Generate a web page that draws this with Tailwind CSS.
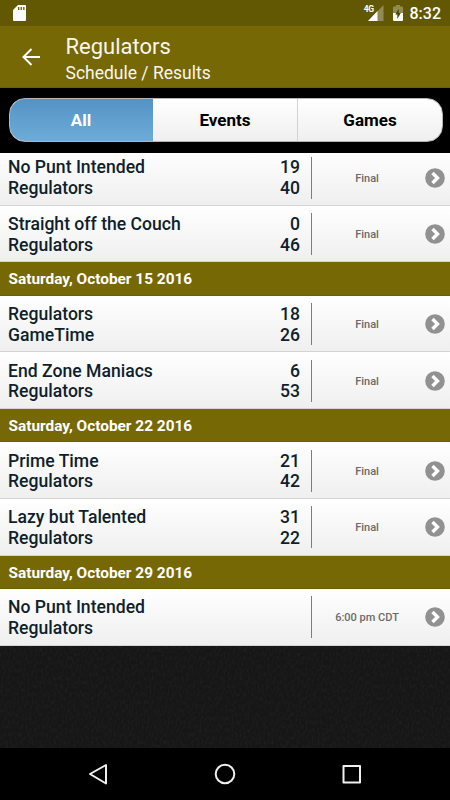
<!DOCTYPE html>
<html lang="en">

<head>
    <meta charset="UTF-8">
    <meta name="viewport" content="width=device-width, initial-scale=1.0">
    <title>Regulators - Schedule / Results</title>
    <script src="https://cdn.jsdelivr.net/npm/@tailwindcss/browser@4"></script>
</head>

<body class="bg-black font-[Roboto,sans-serif]">
    <div class="flex flex-col w-[450px] h-[800px] overflow-hidden">
        <!-- Status bar -->
        <div class="flex items-center h-[26px] shrink-0 bg-[#625804] text-white">
            <svg class="ml-[13px] w-[13px] h-4" viewBox="0 0 13 16">
                <path d="M5 0h7q1 0 1 1v14q0 1-1 1H1q-1 0-1-1V5z" fill="#fff" />
                <path d="M5 2h1.3v3H5zM7.6 2h1.3v3H7.6zM10.2 2h1.3v3h-1.3z" fill="#625804" />
            </svg>
            <div class="flex ml-auto mr-[9px] items-center">
                <span class="text-[8.5px] font-bold leading-none -mt-2 tracking-[-0.5px]">4G</span>
                <svg class="-ml-[6px] w-[16px] h-4" viewBox="0 0 16 16">
                    <path d="M15.500 0v16H0z" fill="#918b51" />
                    <path d="M9.500 6v10H0z" fill="#fff" />
                </svg>
                <svg class="ml-[9px] w-[10px] h-4" viewBox="0 0 10 16">
                    <path d="M3 0h4v1.500h2q1 0 1 1V8H0V2.500q0-1 1-1h2z" fill="#918b51" />
                    <path d="M0 8h10v7q0 1-1 1H1q-1 0-1-1z" fill="#fff" />
                    <path d="M5.700 3.800L2.300 9.500h2V14l3.500-5.900h-2.100z" fill="#4b4303" />
                </svg>
                <span class="ml-[7px] mt-[2px] text-[16px] font-medium leading-none">8:32</span>
            </div>
        </div>

        <!-- Title bar -->
        <header class="flex h-[62px] shrink-0 bg-[#766804] border-b border-[#6b5f08] text-[#f7f6ef]">
            <svg class="ml-[22px] mt-[22px] w-[18px] h-[18px]" viewBox="0 0 18 18" fill="none" stroke="#fff" stroke-width="2">
                <path d="M18 9H1.500M9.500 1L1.500 9l8 8" />
            </svg>
            <div class="ml-[25.500px] pt-[7px]">
                <h1 class="text-[22px] leading-[28px]">Regulators</h1>
                <h2 class="text-[17.500px] leading-[24px]">Schedule / Results</h2>
            </div>
        </header>

        <!-- Filter -->
        <div class="h-[65px] shrink-0 bg-black pt-[10px] pl-[9px]">
            <div class="flex w-[434px] h-[44px] rounded-[16px] overflow-hidden border border-[#b5b5b5] bg-linear-to-b from-white to-[#efefef] text-[17px] font-bold leading-[42px] text-center text-black">
                <div class="-my-px -ml-px w-[144px] border-y border-[#86b9dc] bg-linear-to-b from-[#5393c5] to-[#6eacd8] text-white">All</div>
                <div class="w-[145px] border-r border-[#d2d2d2]">Events</div>
                <div class="flex-1">Games</div>
            </div>
        </div>

        <!-- Schedule -->
        <main class="relative h-[595px] shrink-0 overflow-hidden bg-[#161617]">
            <svg class="absolute inset-0 w-full h-full" aria-hidden="true">
                <filter id="grain">
                    <feTurbulence type="fractalNoise" baseFrequency="0.5 0.25" numOctaves="2" />
                    <feColorMatrix values="0 0 0 0 1  0 0 0 0 1  0 0 0 0 1  0.08 0 0 0 -0.032" />
                </filter>
                <rect width="100%" height="100%" filter="url(#grain)" />
            </svg>
            <div id="schedule" class="relative -mt-[4px]"></div>
        </main>

        <!-- Navigation bar -->
        <nav class="h-[52px] shrink-0 bg-black">
            <svg width="450" height="52" fill="none" stroke="#f0f0f0" stroke-width="2" stroke-linejoin="round">
                <path d="M106 17v18.500L90 26z" />
                <circle cx="225" cy="26" r="9.300" />
                <rect x="343.500" y="18" width="16.500" height="16.500" />
            </svg>
        </nav>
    </div>

    <script>
        const schedule = [
            { away: 'No Punt Intended', home: 'Regulators', score: ['19', '40'], status: 'Final' },
            { away: 'Straight off the Couch', home: 'Regulators', score: ['0', '46'], status: 'Final' },
            { date: 'Saturday, October 15 2016' },
            { away: 'Regulators', home: 'GameTime', score: ['18', '26'], status: 'Final' },
            { away: 'End Zone Maniacs', home: 'Regulators', score: ['6', '53'], status: 'Final' },
            { date: 'Saturday, October 22 2016' },
            { away: 'Prime Time', home: 'Regulators', score: ['21', '42'], status: 'Final' },
            { away: 'Lazy but Talented', home: 'Regulators', score: ['31', '22'], status: 'Final' },
            { date: 'Saturday, October 29 2016' },
            { away: 'No Punt Intended', home: 'Regulators', score: ['', ''], status: '6:00 pm CDT' }
        ];

        document.getElementById('schedule').innerHTML = schedule.map(item => {
            if (item.date) {
                return `
                    <div class="h-[33.200px] px-[8.500px] bg-[#766804] border-b border-[#6b5f08] text-white text-[15.400px] font-bold leading-[34px]">${item.date}</div>
                `;
            }
            return `
                <div class="flex h-[56.700px] last:h-[57.500px] pl-[8px] pr-[5px] bg-linear-to-b from-white to-[#efefef] border-b border-[#d4d4d4] text-[#0f1f2c] text-[17.600px] font-medium leading-[20.800px]">
                    <div class="flex-1 pt-[8.400px]">
                        <div>${item.away}</div>
                        <div>${item.home}</div>
                    </div>
                    <div class="pt-[8.400px] pr-[11px] text-right">
                        <div>${item.score[0]}</div>
                        <div>${item.score[1]}</div>
                    </div>
                    <div class="mt-[7.500px] h-[42px] w-px bg-[#7d7d7d]"></div>
                    <div class="w-[110px] pt-[19.500px] text-center text-[11px] text-[#6a6a6a]">${item.status}</div>
                    <svg class="ml-[3px] mt-[18.500px] w-5 h-5" viewBox="0 0 20 20">
                        <circle cx="10" cy="10" r="9.800" fill="#919191" />
                        <path d="M7.500 5L12.500 10 7.500 15" fill="none" stroke="#fff" stroke-width="3.400" />
                    </svg>
                </div>
            `;
        }).join('');
    </script>
</body>

</html>
